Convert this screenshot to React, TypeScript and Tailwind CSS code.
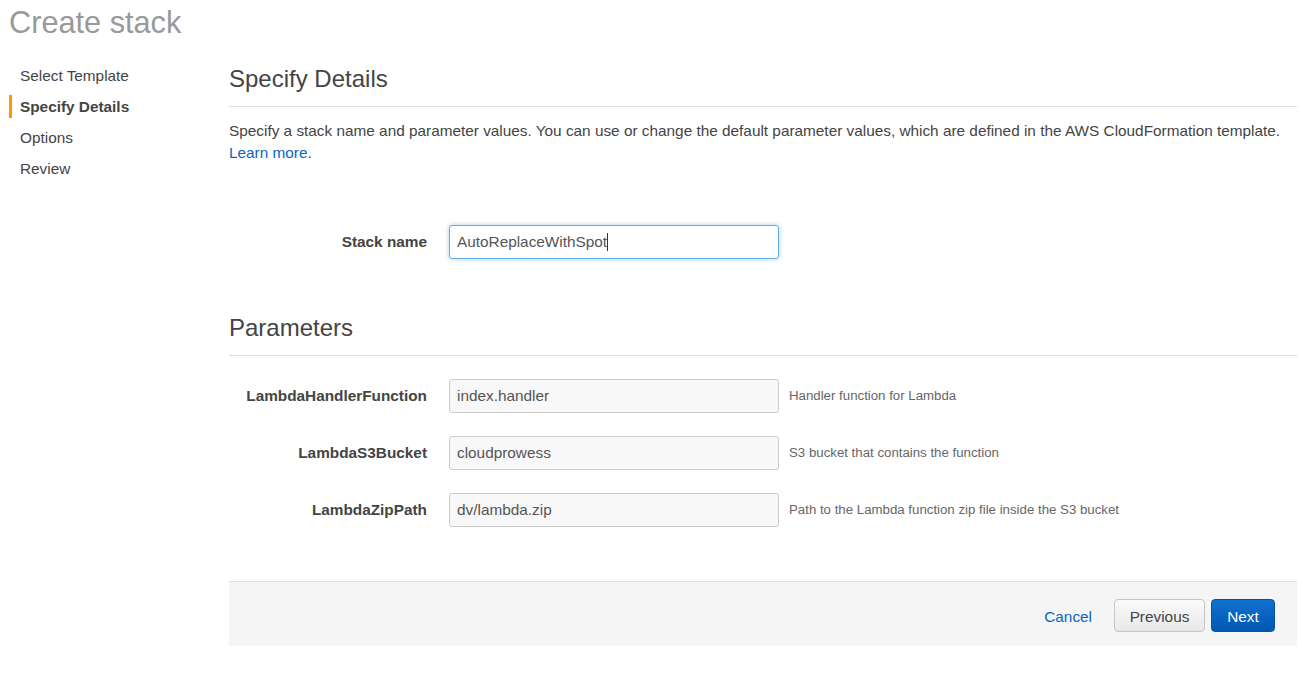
import React from "react";

const font = { fontFamily: '"Liberation Sans", Arial, Helvetica, sans-serif' };

function Row({ label, value, help }: { label: string; value: string; help: string }) {
  return (
    <div className="flex items-center h-[34px]">
      <div className="w-[198px] text-right font-bold text-[15.35px] text-[#444]">{label}</div>
      <div className="ml-[22px] w-[330px] h-[34px] border border-[#ccc] rounded-[3px] bg-[#f8f8f8] flex items-center pl-[7px] text-[15.35px] text-[#555]">
        {value}
      </div>
      <div className="ml-[10px] text-[13.25px] text-[#666]">{help}</div>
    </div>
  );
}

export default function App() {
  return (
    <div className="min-h-[678px] bg-white text-[#444]" style={font}>
      <div className="pl-[9px] h-[45px] leading-[45px] text-[30.7px] text-[#999]">Create stack</div>
      <div className="flex pr-[6px]">
        <div className="w-[229px] shrink-0 pt-[15px]">
          <div className="h-[31px] leading-[31px] pl-[20px] text-[15.35px] text-[#444]">Select Template</div>
          <div className="h-[31px] flex items-center">
            <div className="ml-[9px] w-[3px] h-[23px] bg-[#f90]" />
            <div className="ml-[8px] text-[15.35px] font-bold text-[#444]">Specify Details</div>
          </div>
          <div className="h-[31px] leading-[31px] pl-[20px] text-[15.35px] text-[#444]">Options</div>
          <div className="h-[31px] leading-[31px] pl-[20px] text-[15.35px] text-[#444]">Review</div>
        </div>
        <div className="flex-1 pt-[20px]">
          <div className="text-[24px] leading-[27px] pb-[14px] border-b border-[#ddd] text-[#444]">Specify Details</div>
          <p className="mt-[13px] text-[15.35px] leading-[22px] text-[#444]">
            Specify a stack name and parameter values. You can use or change the default parameter values, which are defined in the AWS CloudFormation template.{" "}
            <span className="text-[#0a66c2]">Learn more.</span>
          </p>
          <div className="mt-[61px] flex items-center h-[34px]">
            <div className="w-[198px] text-right font-bold text-[15.35px] text-[#444]">Stack name</div>
            <div className="ml-[22px] w-[330px] h-[34px] border border-[#66afe9] rounded-[3px] bg-white flex items-center pl-[7px] text-[15.35px] text-[#555] shadow-[0_0_5px_rgba(102,175,233,0.6)]">
              AutoReplaceWithSpot
              <span className="inline-block w-px h-[18px] bg-[#333]" />
            </div>
          </div>
          <div className="mt-[55px] text-[24px] leading-[27px] pb-[14px] border-b border-[#ddd] text-[#444]">Parameters</div>
          <div className="mt-[23px] flex flex-col gap-[23px]">
            <Row label="LambdaHandlerFunction" value="index.handler" help="Handler function for Lambda" />
            <Row label="LambdaS3Bucket" value="cloudprowess" help="S3 bucket that contains the function" />
            <Row label="LambdaZipPath" value="dv/lambda.zip" help="Path to the Lambda function zip file inside the S3 bucket" />
          </div>
          <div className="mt-[54px] h-[65px] bg-[#f5f5f5] border-t border-[#ddd] flex items-center justify-end pr-[22px]">
            <span className="text-[15.35px] text-[#0a66c2] mr-[22px] pt-[5px]">Cancel</span>
            <div className="mt-[2px] w-[91px] h-[33px] rounded-[4px] border border-[#c6c6c6] bg-gradient-to-b from-[#fafafa] to-[#e8e8e8] flex items-center justify-center pt-[3px] text-[15.35px] text-[#444]">
              Previous
            </div>
            <div className="mt-[2px] ml-[6px] w-[64px] h-[33px] rounded-[4px] border border-[#0a50a0] bg-gradient-to-b from-[#1170d0] to-[#0058b3] flex items-center justify-center pt-[3px] text-[15.35px] text-white">
              Next
            </div>
          </div>
        </div>
      </div>
    </div>
  );
}
